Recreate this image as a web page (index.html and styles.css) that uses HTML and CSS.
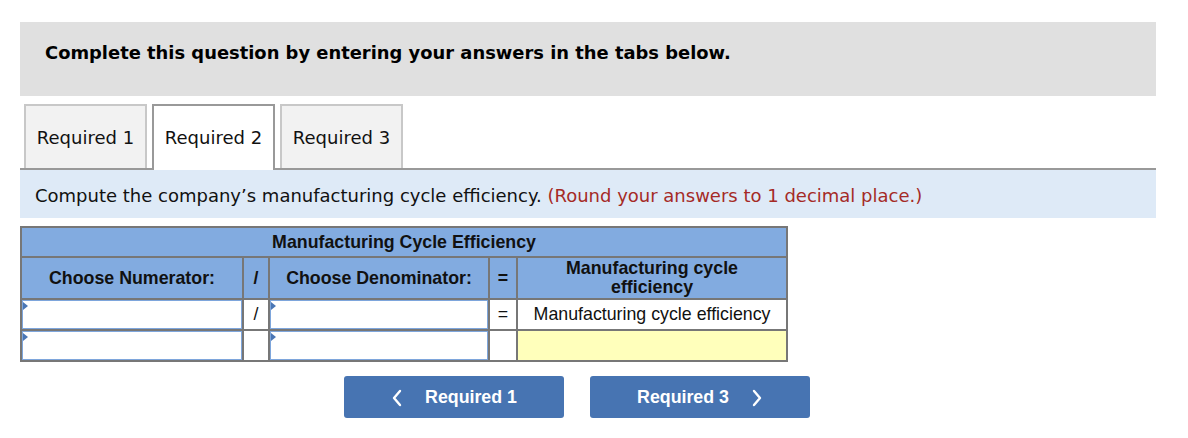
FILE: index.html
```html
<!DOCTYPE html>
<html>
<head>
<meta charset="utf-8">
<link rel="stylesheet" href="styles.css">
</head>
<body>
<div class="page">
  <div class="prompt">Complete this question by entering your answers in the tabs below.</div>
  <div class="tabs">
    <div class="tab">Required 1</div>
    <div class="tab active">Required 2</div>
    <div class="tab">Required 3</div>
  </div>
  <div class="instr">Compute the company’s manufacturing cycle efficiency. <span class="red">(Round your answers to 1 decimal place.)</span></div>
  <table class="mce">
    <colgroup>
      <col class="c-num"><col class="c-op"><col class="c-den"><col class="c-eq"><col class="c-res">
    </colgroup>
    <tr class="r-title"><th colspan="5">Manufacturing Cycle Efficiency</th></tr>
    <tr class="r-head">
      <th>Choose Numerator:</th>
      <th>/</th>
      <th>Choose Denominator:</th>
      <th>=</th>
      <th class="wrap">Manufacturing cycle<br>efficiency</th>
    </tr>
    <tr class="r-data">
      <td class="inp"><div class="field"><span class="mark"></span></div></td>
      <td class="op">/</td>
      <td class="inp"><div class="field"><span class="mark"></span></div></td>
      <td class="op">=</td>
      <td class="label">Manufacturing cycle efficiency</td>
    </tr>
    <tr class="r-data">
      <td class="inp"><div class="field"><span class="mark"></span></div></td>
      <td class="op"></td>
      <td class="inp"><div class="field"><span class="mark"></span></div></td>
      <td class="op"></td>
      <td class="answer"></td>
    </tr>
  </table>
  <div class="nav">
    <div class="btn"><svg class="chev" width="12" height="18" viewBox="0 0 12 18"><path d="M9 2 L3 9 L9 16" fill="none" stroke="#fff" stroke-width="2.4" stroke-linecap="round" stroke-linejoin="round"/></svg><span>Required 1</span></div>
    <div class="btn"><span>Required 3</span><svg class="chev" width="12" height="18" viewBox="0 0 12 18"><path d="M3 2 L9 9 L3 16" fill="none" stroke="#fff" stroke-width="2.4" stroke-linecap="round" stroke-linejoin="round"/></svg></div>
  </div>
</div>
</body>
</html>
```

FILE: styles.css
```css
html, body {
  margin: 0;
  padding: 0;
  background: #fff;
}
.page {
  width: 1136px;
  margin: 22px 0 0 20px;
  font-family: "DejaVu Sans", Verdana, sans-serif;
  font-size: 18px;
  color: #111;
}
.prompt {
  background: #e0e0e0;
  height: 74px;
  box-sizing: border-box;
  padding: 20px 0 0 25px;
  line-height: 22px;
  font-weight: bold;
  font-size: 17.9px;
  color: #000;
}
.tabs {
  margin-top: 8px;
  display: flex;
  gap: 5px;
  padding-left: 4px;
  border-bottom: 2px solid #999;
  height: 64px;
}
.tab {
  width: 123px;
  height: 64px;
  box-sizing: border-box;
  padding-top: 1px;
  background: #f2f2f2;
  border: 2px solid #c8c8c8;
  border-bottom: none;
  display: flex;
  align-items: center;
  justify-content: center;
  color: #111;
}
.tab.active {
  background: #fff;
  border-color: #999;
  height: 66px;
  padding-top: 0;
  padding-bottom: 2px;
  margin-bottom: -2px;
}
.instr {
  background: #deeaf7;
  height: 48px;
  box-sizing: border-box;
  padding: 3px 0 0 15px;
  display: flex;
  align-items: center;
  white-space: pre;
}
.red {
  color: #a52a26;
}
.mce {
  margin-top: 8px;
  border-collapse: collapse;
  table-layout: fixed;
  width: 768px;
  font-family: "Liberation Sans", Arial, sans-serif;
  font-size: 17.8px;
  color: #111;
}
.c-num { width: 222px; }
.c-op { width: 26px; }
.c-den { width: 220px; }
.c-eq { width: 28px; }
.c-res { width: 270px; }
.mce th, .mce td {
  border: 2px solid #777;
  padding: 0;
  text-align: center;
}
.mce th {
  background: #82abe0;
  font-weight: bold;
}
.r-title { height: 30px; }
.r-head { height: 42px; }
.r-data { height: 31px; }
.wrap {
  line-height: 19px;
}
.inp {
  background: #fff;
  vertical-align: top;
}
.field {
  position: relative;
  height: 29px;
  box-sizing: border-box;
  border: 1px solid #7ea6dc;
  background: #fff;
}
.mark {
  position: absolute;
  left: 0;
  top: 1px;
  width: 0;
  height: 0;
  border-top: 4px solid transparent;
  border-bottom: 4px solid transparent;
  border-left: 5px solid #4a76b5;
}
.op {
  background: #fff;
}
.label {
  background: #fff;
}
.answer {
  background: #ffffbb;
}
.nav {
  margin-top: 14px;
  display: flex;
  gap: 26px;
  padding-left: 324px;
}
.btn {
  width: 220px;
  height: 42px;
  box-sizing: border-box;
  padding-top: 1px;
  background: #4774b2;
  border-radius: 3px;
  color: #fff;
  font-family: "Liberation Sans", Arial, sans-serif;
  font-weight: bold;
  font-size: 17.8px;
  display: flex;
  align-items: center;
  justify-content: center;
  gap: 22px;
}
.chev {
  display: block;
}
```
